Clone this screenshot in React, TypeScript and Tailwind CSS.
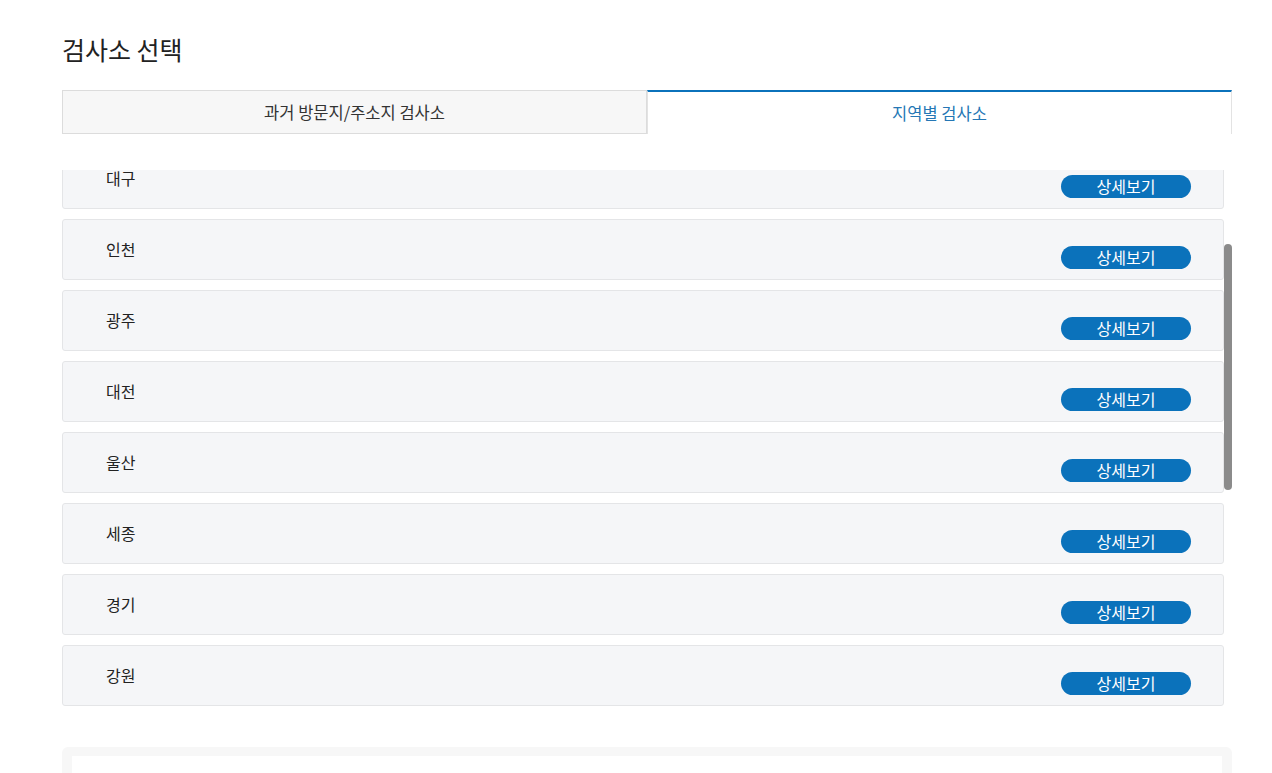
import React, { useLayoutEffect, useRef } from "react";

const regions = [
  "서울",
  "부산",
  "대구",
  "인천",
  "광주",
  "대전",
  "울산",
  "세종",
  "경기",
  "강원",
  "충북",
  "충남",
  "전북",
  "전남",
  "경북",
  "경남",
  "제주",
];

export default function App() {
  const listRef = useRef<HTMLDivElement>(null);
  useLayoutEffect(() => {
    if (listRef.current) listRef.current.scrollTop = 164;
  }, []);

  return (
    <div
      className="min-h-[773px] bg-white text-[#222]"
      style={{ fontFamily: '"Noto Sans CJK KR", "Noto Sans", sans-serif' }}
    >
      <div className="ml-[62px] w-[1170px] pt-[34px]">
        <h1 className="text-[25px] leading-[30px] font-normal text-[#222]">
          검사소 선택
        </h1>

        <div className="mt-[26px] flex h-[44px]">
          <div className="flex w-[585px] items-center justify-center border border-[#dcdcdc] bg-[#f7f7f7] text-[16.5px] text-[#333]">
            과거 방문지/주소지 검사소
          </div>
          <div className="flex w-[585px] items-center justify-center border-t-2 border-x border-t-[#0b72bb] border-x-[#e3e3e3] bg-white text-[16.5px] text-[#2577b5]">
            지역별 검사소
          </div>
        </div>

        <div className="mt-[36px] flex h-[540px]">
          <div ref={listRef} className="h-full w-[1162px] overflow-hidden">
            <div className="flex flex-col gap-[10px]">
              {regions.map((r) => (
                <div
                  key={r}
                  className="flex h-[61px] shrink-0 items-start justify-between rounded-[3px] border border-[#e4e5e7] bg-[#f5f6f8] pl-[43px] pr-[32px]"
                >
                  <span className="mt-[19px] text-[16px] leading-[20px] text-[#222]">
                    {r}
                  </span>
                  <button className="mt-[26px] flex h-[23px] w-[130px] items-center justify-center rounded-full bg-[#0b72bb] pb-[1px] text-[16px] leading-[20px] text-white">
                    상세보기
                  </button>
                </div>
              ))}
            </div>
          </div>
          <div className="w-[8px] pt-[74px]">
            <div className="h-[246px] w-[8px] rounded-full bg-[#8b8b8b]" />
          </div>
        </div>

        <div className="mt-[37px] rounded-[6px] bg-[#f7f7f7] px-[10px] pt-[9px]">
          <div className="h-[200px] bg-white" />
        </div>
      </div>
    </div>
  );
}
